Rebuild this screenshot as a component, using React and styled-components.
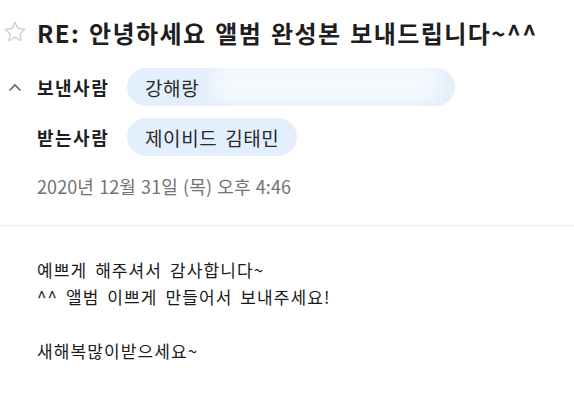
import React from "react";
import styled, { createGlobalStyle } from "styled-components";

const Global = createGlobalStyle`
  html, body { margin: 0; padding: 0; background: #fff; }
  body { font-family: "Noto Sans CJK KR", "Noto Sans", sans-serif; color: #222; }
`;

const Page = styled.div`
  width: 574px;
  height: 409px;
  overflow: hidden;
  background: #fff;
`;

const Header = styled.header`
  padding: 17px 0 0 0;
  border-bottom: 1px solid #ebebeb;
  height: 226px;
  box-sizing: border-box;
`;

const TitleRow = styled.div`
  display: flex;
  align-items: center;
  height: 30px;
`;

const IconSlot = styled.div`
  width: 37px;
  flex: none;
  display: flex;
  align-items: center;
  padding-left: ${(p) => p.$pad}px;
  box-sizing: border-box;
`;

const Title = styled.h1`
  margin: 0;
  font-size: 24px;
  font-weight: 700;
  color: #1e1e1e;
  letter-spacing: 1.4px;
  word-spacing: 2px;
  white-space: nowrap;
`;

const Rows = styled.div`
  display: flex;
  flex-direction: column;
  gap: 12px;
  margin-top: 21px;
`;

const Row = styled.div`
  display: flex;
  align-items: center;
  height: 38px;
`;

const Label = styled.div`
  width: 90px;
  flex: none;
  font-size: 18px;
  font-weight: 700;
  letter-spacing: 1.5px;
  color: #1e1e1e;
`;

const Chip = styled.div`
  position: relative;
  display: inline-flex;
  align-items: center;
  height: 38px;
  padding: 0 18px;
  border-radius: 19px;
  background: #e3effc;
  font-size: 19px;
  letter-spacing: 0.6px;
  word-spacing: 3px;
  color: #2a2a2a;
  white-space: nowrap;
  box-sizing: border-box;
`;

const Hidden = styled.span`
  display: inline-block;
  width: ${(p) => p.$w}px;
  height: 20px;
`;

const Blur = styled.span`
  position: absolute;
  left: 84px;
  right: 14px;
  top: -6px;
  bottom: 2px;
  background: rgba(255, 255, 255, 0.6);
  filter: blur(8px);
  border-radius: 20px;
`;

const DateLine = styled.div`
  margin-top: 17px;
  padding-left: 37px;
  font-size: 18px;
  letter-spacing: 0.1px;
  word-spacing: 1px;
  color: #727272;
`;

const Body = styled.div`
  padding: 30px 0 0 37px;
  font-size: 17px;
  line-height: 27px;
  letter-spacing: 1.1px;
  word-spacing: 3px;
  color: #1a1a1a;
  font-weight: 400;
`;

const Para = styled.p`
  margin: 0;
`;

const Star = () => (
  <svg width="24" height="24" viewBox="0 0 24 24" fill="none">
    <path
      d="M12 2.2l2.95 6.2 6.8.85-5 4.7 1.3 6.75L12 17.35 5.95 20.7l1.3-6.75-5-4.7 6.8-.85z"
      stroke="#c9cce0"
      strokeWidth="1.3"
      strokeLinejoin="round"
    />
  </svg>
);

const Chevron = () => (
  <svg width="14" height="9" viewBox="0 0 14 9" fill="none">
    <path d="M1.5 7.5L7 2l5.5 5.5" stroke="#666" strokeWidth="1.6" />
  </svg>
);

export default function App() {
  return (
    <Page>
      <Global />
      <Header>
        <TitleRow>
          <IconSlot $pad={3}>
            <Star />
          </IconSlot>
          <Title>RE: 안녕하세요 앨범 완성본 보내드립니다~^^</Title>
        </TitleRow>
        <Rows>
          <Row>
            <IconSlot $pad={8}>
              <Chevron />
            </IconSlot>
            <Label>보낸사람</Label>
            <Chip>
              강해랑
              <Hidden $w={238} />
              <Blur />
            </Chip>
          </Row>
          <Row>
            <IconSlot $pad={8} />
            <Label>받는사람</Label>
            <Chip>제이비드 김태민</Chip>
          </Row>
        </Rows>
        <DateLine>2020년 12월 31일 (목) 오후 4:46</DateLine>
      </Header>
      <Body>
        <Para>예쁘게 해주셔서 감사합니다~</Para>
        <Para>^^ 앨범 이쁘게 만들어서 보내주세요!</Para>
        <Para>&nbsp;</Para>
        <Para>새해복많이받으세요~</Para>
      </Body>
    </Page>
  );
}
